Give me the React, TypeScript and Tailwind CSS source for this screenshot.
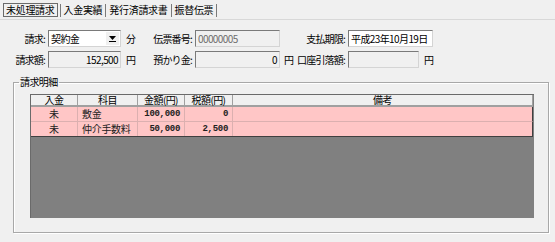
import type { ReactNode } from "react";

const cols = [
    { w: "w-[47px]", label: "入金" },
    { w: "w-[60px]", label: "科目" },
    { w: "w-[47px]", label: "金額(円)" },
    { w: "w-[48px]", label: "税額(円)" },
    { w: "w-[300px]", label: "備考" },
];

const rows = [
    { status: "未", item: "敷金", amount: "100,000", tax: "0" },
    { status: "未", item: "仲介手数料", amount: "50,000", tax: "2,500" },
];

function Label({ children }: { children: ReactNode }) {
    return <span className="pr-[3px] tracking-[-0.8px] whitespace-nowrap">{children}</span>;
}

function Field({ value, width, disabled, align = "left", grayText }: { value: string; width: string; disabled?: boolean; align?: "left" | "right"; grayText?: boolean }) {
    return (
        <div
            className={`${width} h-[17px] flex items-center px-[2px] border border-t-[#7a7a7a] border-l-[#7a7a7a] border-r-[#d4d4d4] border-b-[#d4d4d4] ${disabled ? "bg-[#f0f0f0]" : "bg-white"} ${align === "right" ? "justify-end" : ""} ${grayText ? "text-[#6d6d6d]" : ""} tracking-[-0.6px] whitespace-nowrap`}
        >
            {value}
        </div>
    );
}

function Tabs() {
    const tabs = ["未処理請求", "入金実績", "発行済請求書", "振替伝票"];
    return (
        <div className="h-[20px] flex items-start pt-[3px] pl-[3px] border-b border-[#d8d8d8]">
            {tabs.map((t, i) => (
                <div key={t} className="flex items-center">
                    <div className={`h-[14px] flex items-center tracking-[-0.3px] ${i === 0 ? "border border-[#6a6a6a] px-[2px]" : "px-[1px]"}`}>{t}</div>
                    <div className="w-px h-[13px] bg-[#7a7a7a] mx-[2px]" />
                </div>
            ))}
        </div>
    );
}

export default function App() {
    return (
        <div className="w-[555px] h-[242px] bg-[#f0f0f0] text-[10px] leading-[12px] text-black overflow-hidden font-['Noto_Sans_CJK_JP','Liberation_Sans',sans-serif]">
            <Tabs />

            <div className="pt-[10px] grid grid-cols-[48px_73px_74px_85px_68px_90px] grid-rows-[17px_17px] gap-y-[4px]">
                <div className="flex items-center justify-end"><Label>請求:</Label></div>
                <div className="h-[17px] flex items-center bg-white border border-t-[#7a7a7a] border-l-[#7a7a7a] border-r-[#d4d4d4] border-b-[#d4d4d4]">
                    <span className="flex-1 pl-[2px] tracking-[-0.6px]">契約金</span>
                    <div className="w-[13px] h-[13px] mr-[1px] bg-[#f0f0f0] flex flex-col items-center justify-center">
                        <svg width="7" height="4" viewBox="0 0 7 4"><path d="M0 0h7L3.5 4z" fill="#000" /></svg>
                        <div className="w-[7px] h-px bg-black mt-[1px]" />
                    </div>
                </div>
                <div className="flex items-center justify-between pl-[5px]">
                    <span>分</span>
                    <Label>伝票番号:</Label>
                </div>
                <div className="flex items-center"><Field value="00000005" width="w-[85px]" disabled grayText /></div>
                <div className="flex items-center justify-end"><Label>支払期限:</Label></div>
                <div className="flex items-center"><Field value="平成23年10月19日" width="w-[85px]" /></div>

                <div className="flex items-center justify-end"><Label>請求額:</Label></div>
                <div className="flex items-center"><Field value="152,500" width="w-[73px]" disabled align="right" /></div>
                <div className="flex items-center justify-between pl-[5px]">
                    <span>円</span>
                    <Label>預かり金:</Label>
                </div>
                <div className="flex items-center"><Field value="0" width="w-[85px]" disabled align="right" /></div>
                <div className="flex items-center justify-between pl-[4px]">
                    <span>円</span>
                    <Label>口座引落額:</Label>
                </div>
                <div className="flex items-center gap-[5px]">
                    <Field value="" width="w-[71px]" disabled />
                    <span>円</span>
                </div>
            </div>

            <fieldset className="mt-[8px] ml-[13px] mr-[6px] h-[157px] pl-[5px] border border-[#a8a8a8] shadow-[inset_1px_1px_0_#ffffff,1px_1px_0_#ffffff]">
                <legend className="px-[1px] leading-[12px] tracking-[-0.6px]">請求明細</legend>
                <div className="ml-[11px] mt-[6px] w-[504px] h-[124px] bg-[#808080] border-l border-t border-[#6a6a6a]">
                    <div className="flex w-[502px] h-[12px] bg-[#f0f0f0] border-b-2 border-[#a0a0a0]">
                        {cols.map((c) => (
                            <div key={c.label} className={`${c.w} h-[10px] flex items-center justify-center border-r border-[#a0a0a0] leading-[10px] tracking-[-0.6px]`}>
                                {c.label}
                            </div>
                        ))}
                    </div>
                    {rows.map((r, i) => (
                        <div
                            key={r.item}
                            className={`flex w-[502px] h-[15px] bg-[#ffc6c6] border-r border-[#404040] ${i === rows.length - 1 ? "border-b border-b-[#404040]" : "border-b border-b-[#dcb0b0]"} text-[#202020]`}
                        >
                            <div className="w-[47px] flex items-center justify-center border-r border-[#dcb0b0]">{r.status}</div>
                            <div className="w-[60px] flex items-center pl-[4px] border-r border-[#dcb0b0] tracking-[-0.3px]">{r.item}</div>
                            <div className="w-[47px] flex items-center justify-end pr-[4px] border-r border-[#dcb0b0] text-[9px] font-bold tracking-[-0.3px] font-['Liberation_Mono',monospace]">{r.amount}</div>
                            <div className="w-[48px] flex items-center justify-end pr-[4px] border-r border-[#dcb0b0] text-[9px] font-bold tracking-[-0.3px] font-['Liberation_Mono',monospace]">{r.tax}</div>
                            <div className="flex-1" />
                        </div>
                    ))}
                </div>
            </fieldset>
        </div>
    );
}
